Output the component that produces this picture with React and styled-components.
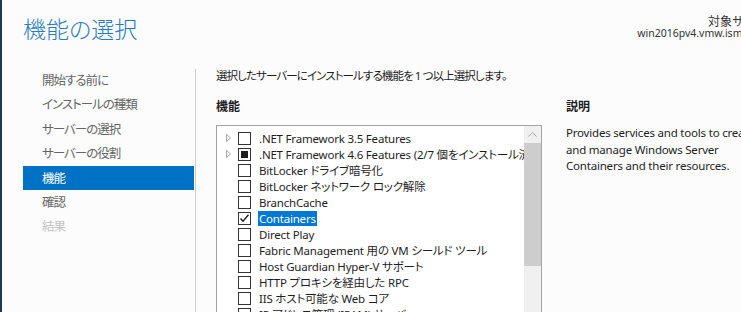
import React from 'react';
import styled, { createGlobalStyle } from 'styled-components';

const GlobalStyle = createGlobalStyle`
    html, body {
        margin: 0;
        padding: 0;
        overflow: hidden;
        background: #fcfcfc;
    }
    body {
        font-family: "Noto Sans", "Noto Sans CJK JP", sans-serif;
        font-feature-settings: "palt";
        color: #1e1e1e;
    }
`;

const Window = styled.div`
    display: flex;
    width: 741px;
    height: 312px;
    overflow: hidden;
    background: #fcfcfc;
`;
const EdgeStrip = styled.div`
    width: 2px;
    flex-shrink: 0;
    background: #1d3a5c;
`;
const Main = styled.div`
    display: flex;
    flex-direction: column;
    flex: 1;
    min-width: 0;
`;
const Header = styled.div`
    display: flex;
    justify-content: space-between;
    align-items: flex-start;
    height: 68px;
    padding-left: 21px;
    margin-right: -39px;
`;
const PageTitle = styled.h1`
    margin: 13px 0 0;
    font-family: "Noto Sans CJK JP", sans-serif;
    font-weight: 300;
    font-size: 23px;
    line-height: 30px;
    color: #2a7cc0;
`;
const Target = styled.div`
    display: flex;
    flex-direction: column;
    align-items: flex-end;
    padding-top: 14px;
    color: #333;
    white-space: nowrap;
`;
const TargetLabel = styled.span`
    font-family: "Noto Sans CJK JP", sans-serif;
    font-feature-settings: normal;
    font-size: 12px;
    line-height: 13px;
`;
const TargetHost = styled.span`
    font-size: 10.5px;
    line-height: 13px;
`;
const Body = styled.div`
    display: flex;
    flex: 1;
    min-height: 0;
`;
const Nav = styled.ul`
    list-style: none;
    margin: 0 0 0 21px;
    padding: 0;
    width: 171px;
    flex-shrink: 0;
`;
const NavItem = styled.li`
    height: 24.4px;
    line-height: 24.4px;
    padding-left: 19px;
    font-size: 12.5px;
    letter-spacing: -1px;
    font-family: "Noto Sans CJK JP", sans-serif;
    color: ${p => p.$active ? '#fff' : p.$disabled ? '#c4c4c4' : '#666'};
    background: ${p => p.$active ? '#0072c6' : 'transparent'};
`;
const Divider = styled.div`
    width: 1px;
    margin: 1px 0 0 1px;
    background: #cfcfcf;
    flex-shrink: 0;
`;
const Content = styled.div`
    flex: 1;
    padding-left: 20px;
    min-width: 0;
`;
const Intro = styled.p`
    margin: 0;
    font-size: 11.5px;
    letter-spacing: -0.9px;
    line-height: 16px;
    white-space: nowrap;
`;
const Columns = styled.div`
    display: flex;
    gap: 24px;
    margin-top: 15px;
`;
const FeatureColumn = styled.div`
    width: 326px;
    flex-shrink: 0;
`;
const DescColumn = styled.div`
    flex: 1;
`;
const SectionTitle = styled.h3`
    margin: 0;
    font-size: 12px;
    line-height: 16px;
    font-weight: 700;
`;
const ListBox = styled.div`
    display: flex;
    margin-top: 10px;
    height: 200px;
    border: 1px solid #a3a3a3;
    border-bottom: none;
    background: #fff;
`;
const Rows = styled.div`
    flex: 1;
    min-width: 0;
    overflow: hidden;
    padding-top: 4px;
`;
const Row = styled.div`
    display: flex;
    align-items: center;
    height: 16px;
    padding-left: 9px;
    white-space: nowrap;
    font-size: 11.5px;
    letter-spacing: -0.2px;
`;
const Expander = styled.span`
    display: flex;
    align-items: center;
    width: 12px;
    flex-shrink: 0;
`;
const Box = styled.span`
    display: flex;
    align-items: center;
    justify-content: center;
    box-sizing: border-box;
    width: 13px;
    height: 13px;
    border: 1px solid #333;
    background: #fff;
    flex-shrink: 0;
`;
const PartialMark = styled.span`
    width: 7px;
    height: 7px;
    background: #1e1e1e;
`;
const Label = styled.span`
    margin-left: 7px;
    padding: 0 1px;
    line-height: 15px;
    color: ${p => p.$selected ? '#fff' : '#1e1e1e'};
    background: ${p => p.$selected ? '#0078d7' : 'transparent'};
`;
const ScrollBar = styled.div`
    display: flex;
    flex-direction: column;
    width: 17px;
    flex-shrink: 0;
    background: #f0f0f0;
`;
const ScrollButton = styled.div`
    display: flex;
    align-items: center;
    justify-content: center;
    height: 17px;
`;
const ScrollThumb = styled.div`
    height: 123px;
    background: #cdcdcd;
`;
const DescText = styled.p`
    margin: 10px 0 0;
    font-size: 11.5px;
    letter-spacing: -0.2px;
    line-height: 16.5px;
    white-space: nowrap;
`;

const features = [
    { label: '.NET Framework 3.5 Features', expandable: true },
    { label: '.NET Framework 4.6 Features (2/7 個をインストール済み)', expandable: true, state: 'partial' },
    { label: 'BitLocker ドライブ暗号化' },
    { label: 'BitLocker ネットワーク ロック解除' },
    { label: 'BranchCache' },
    { label: 'Containers', state: 'checked', selected: true },
    { label: 'Direct Play' },
    { label: 'Fabric Management 用の VM シールド ツール' },
    { label: 'Host Guardian Hyper-V サポート' },
    { label: 'HTTP プロキシを経由した RPC' },
    { label: 'IIS ホスト可能な Web コア' },
    { label: 'IP アドレス管理 (IPAM) サーバー' },
];

const steps = [
    { label: '開始する前に' },
    { label: 'インストールの種類' },
    { label: 'サーバーの選択' },
    { label: 'サーバーの役割' },
    { label: '機能', active: true },
    { label: '確認' },
    { label: '結果', disabled: true },
];

const Check = ({ state }) => {
    if (state === 'partial') return <Box><PartialMark /></Box>;
    if (state === 'checked') {
        return (
            <Box>
                <svg width="11" height="11" viewBox="0 0 11 11">
                    <path d="M1.5 5.5 L4 8.2 L9.5 1.8" fill="none" stroke="#1e1e1e" strokeWidth="1.4" />
                </svg>
            </Box>
        );
    }
    return <Box />;
};

export default function App() {
    return (
        <Window>
            <GlobalStyle />
            <EdgeStrip />
            <Main>
                <Header>
                    <PageTitle>機能の選択</PageTitle>
                    <Target>
                        <TargetLabel>対象サーバー</TargetLabel>
                        <TargetHost>win2016pv4.vmw.ism21.local</TargetHost>
                    </Target>
                </Header>
                <Body>
                    <Nav>
                        {steps.map(s => (
                            <NavItem key={s.label} $active={s.active} $disabled={s.disabled}>{s.label}</NavItem>
                        ))}
                    </Nav>
                    <Divider />
                    <Content>
                        <Intro>選択したサーバーにインストールする機能を 1 つ以上選択します。</Intro>
                        <Columns>
                            <FeatureColumn>
                                <SectionTitle>機能</SectionTitle>
                                <ListBox>
                                    <Rows>
                                        {features.map(f => (
                                            <Row key={f.label}>
                                                <Expander>
                                                    {f.expandable && (
                                                        <svg width="5" height="8" viewBox="0 0 5 8">
                                                            <path d="M0.5 0.5 L4.5 4 L0.5 7.5 Z" fill="none" stroke="#a6a6a6" strokeWidth="1" />
                                                        </svg>
                                                    )}
                                                </Expander>
                                                <Check state={f.state} />
                                                <Label $selected={f.selected}>{f.label}</Label>
                                            </Row>
                                        ))}
                                    </Rows>
                                    <ScrollBar>
                                        <ScrollButton>
                                            <svg width="9" height="5" viewBox="0 0 9 5">
                                                <path d="M0.5 4.5 L4.5 0.7 L8.5 4.5" fill="none" stroke="#a6a6a6" strokeWidth="1" />
                                            </svg>
                                        </ScrollButton>
                                        <ScrollThumb />
                                    </ScrollBar>
                                </ListBox>
                            </FeatureColumn>
                            <DescColumn>
                                <SectionTitle>説明</SectionTitle>
                                <DescText>
                                    Provides services and tools to create<br />
                                    and manage Windows Server<br />
                                    Containers and their resources.
                                </DescText>
                            </DescColumn>
                        </Columns>
                    </Content>
                </Body>
            </Main>
        </Window>
    );
}
